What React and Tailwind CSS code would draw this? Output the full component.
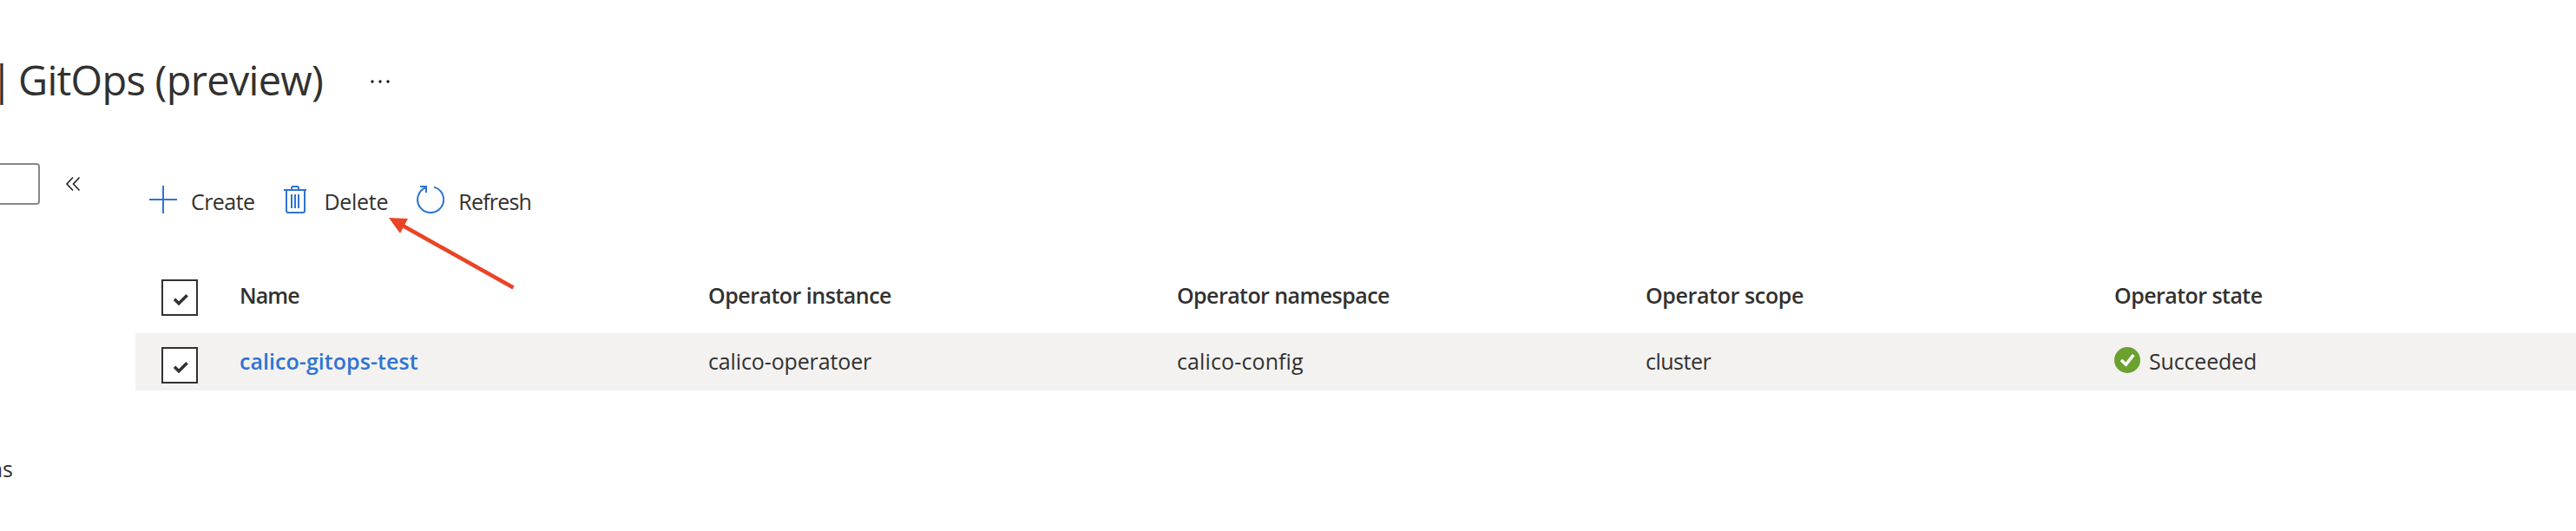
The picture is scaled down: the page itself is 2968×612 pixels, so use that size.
const columns = [
  { title: "Name", tracking: "tracking-[-0.9px]" },
  { title: "Operator instance", tracking: "tracking-[-0.5px]" },
  { title: "Operator namespace", tracking: "tracking-[-0.57px]" },
  { title: "Operator scope", tracking: "tracking-[-0.37px]" },
  { title: "Operator state", tracking: "tracking-[-0.55px]" },
];

function Checkbox() {
  return (
    <span role="checkbox" aria-checked="true" className="block size-[42px] shrink-0 border-2 border-[#323130] bg-white">
      <svg viewBox="0 0 38 38" className="size-[38px]" fill="none" stroke="#323130" strokeWidth="3.4">
        <path d="M13 20.8 18 25.8 27.6 16.2" />
      </svg>
    </span>
  );
}

function PlusIcon() {
  return (
    <svg viewBox="0 0 32 32" className="size-8" stroke="#2f74d0" strokeWidth="2">
      <path d="M16 0V32M0 16H32" />
    </svg>
  );
}

function TrashIcon() {
  return (
    <svg viewBox="0 0 26 32" className="h-8 w-[26px]" fill="none" stroke="#2f74d0" strokeWidth="2">
      <path d="M0 5H26M9 5V2.5Q9 1 10.5 1H15.5Q17 1 17 2.5V5M3 5V29Q3 31 5 31H22Q24 31 24 29V5" />
      <path d="M9 10V26M13 10V26M17 10V26" />
    </svg>
  );
}

function RefreshIcon() {
  return (
    <svg viewBox="0 0 32 32" className="size-8" fill="none" stroke="#2f74d0" strokeWidth="2">
      <path d="M20 1.6A15 15 0 1 1 11 2" />
      <path d="M4 1H11V8" />
    </svg>
  );
}

function SuccessIcon() {
  return (
    <svg viewBox="0 0 30 30" className="size-[30px]" fill="none">
      <circle cx="15" cy="15" r="15" fill="#6ba12f" />
      <path d="M8 15 13.5 20 22.2 9" stroke="#fff" strokeWidth="3.6" />
    </svg>
  );
}

export default function App() {
  return (
    <div className="relative flex h-[612px] w-[2968px] flex-col overflow-hidden bg-white font-['Open_Sans','Noto_Sans',sans-serif] text-[25px] leading-9 text-[#323130] antialiased">
      <header className="flex h-[188px] items-start pt-[60px]">
        <h1 className="flex h-16 text-[47px] leading-[64px]">
          <span className="ml-[-11px] w-8">|</span>
          <span className="w-[405px] tracking-[-0.74px]">GitOps (preview)</span>
        </h1>
        <svg viewBox="0 0 24 6" className="mt-[31px] h-1.5 w-6" fill="#1b1a19">
          <circle cx="3" cy="3" r="1.7" />
          <circle cx="12" cy="3" r="1.7" />
          <circle cx="21" cy="3" r="1.7" />
        </svg>
      </header>

      <div className="flex flex-1">
        <aside className="w-[156px] shrink-0">
          <div className="flex">
            <div className="h-12 w-[46px] rounded-r border-2 border-l-0 border-[#8a8886]" />
            <svg viewBox="0 0 18 18" className="mt-[15px] ml-[29px] size-[18px]" fill="none" stroke="#1b1a19" strokeWidth="1.5">
              <path d="M9 1.5 2 9 9 16.5M16.5 1.5 9.5 9 16.5 16.5" />
            </svg>
          </div>
          <div className="mt-[286px] flex w-[15px] justify-end overflow-hidden">ns</div>
        </aside>

        <main className="flex flex-1 flex-col">
          <div className="flex h-[108px] items-start pt-[26px] pl-4">
            <button className="flex">
              <PlusIcon />
              <span className="ml-4 tracking-[-0.56px]">Create</span>
            </button>
            <button className="ml-[34px] flex">
              <TrashIcon />
              <span className="ml-5 tracking-[-0.29px]">Delete</span>
            </button>
            <button className="ml-[33px] flex">
              <RefreshIcon />
              <span className="ml-4 tracking-[-0.78px]">Refresh</span>
            </button>
          </div>

          <div className="grid h-[88px] grid-cols-[120px_repeat(4,540px)_1fr] items-start pt-[26px] font-semibold">
            <div className="pl-[30px]">
              <Checkbox />
            </div>
            {columns.map((c) => (
              <div key={c.title} className={c.tracking}>
                {c.title}
              </div>
            ))}
          </div>

          <div className="grid h-[66px] grid-cols-[120px_repeat(4,540px)_1fr] items-start bg-[#f3f2f1] pt-[14px]">
            <div className="mt-0.5 pl-[30px]">
              <Checkbox />
            </div>
            <a className="font-semibold tracking-[0.05px] text-[#2f74d0]">calico-gitops-test</a>
            <div className="tracking-[-0.13px]">calico-operatoer</div>
            <div className="tracking-[0.12px]">calico-config</div>
            <div className="tracking-[-0.5px]">cluster</div>
            <div className="flex">
              <div className="mt-0.5">
                <SuccessIcon />
              </div>
              <span className="ml-2.5 tracking-[-0.18px]">Succeeded</span>
            </div>
          </div>
        </main>
      </div>

      <svg viewBox="0 0 150 90" className="absolute top-[246px] left-[444px] h-[90px] w-[150px]">
        <path d="M20 14 147.5 85.500" stroke="#ea4326" strokeWidth="4.5" />
        <path d="M4 5 26 6 17 23Z" fill="#ea4326" />
      </svg>
    </div>
  );
}
